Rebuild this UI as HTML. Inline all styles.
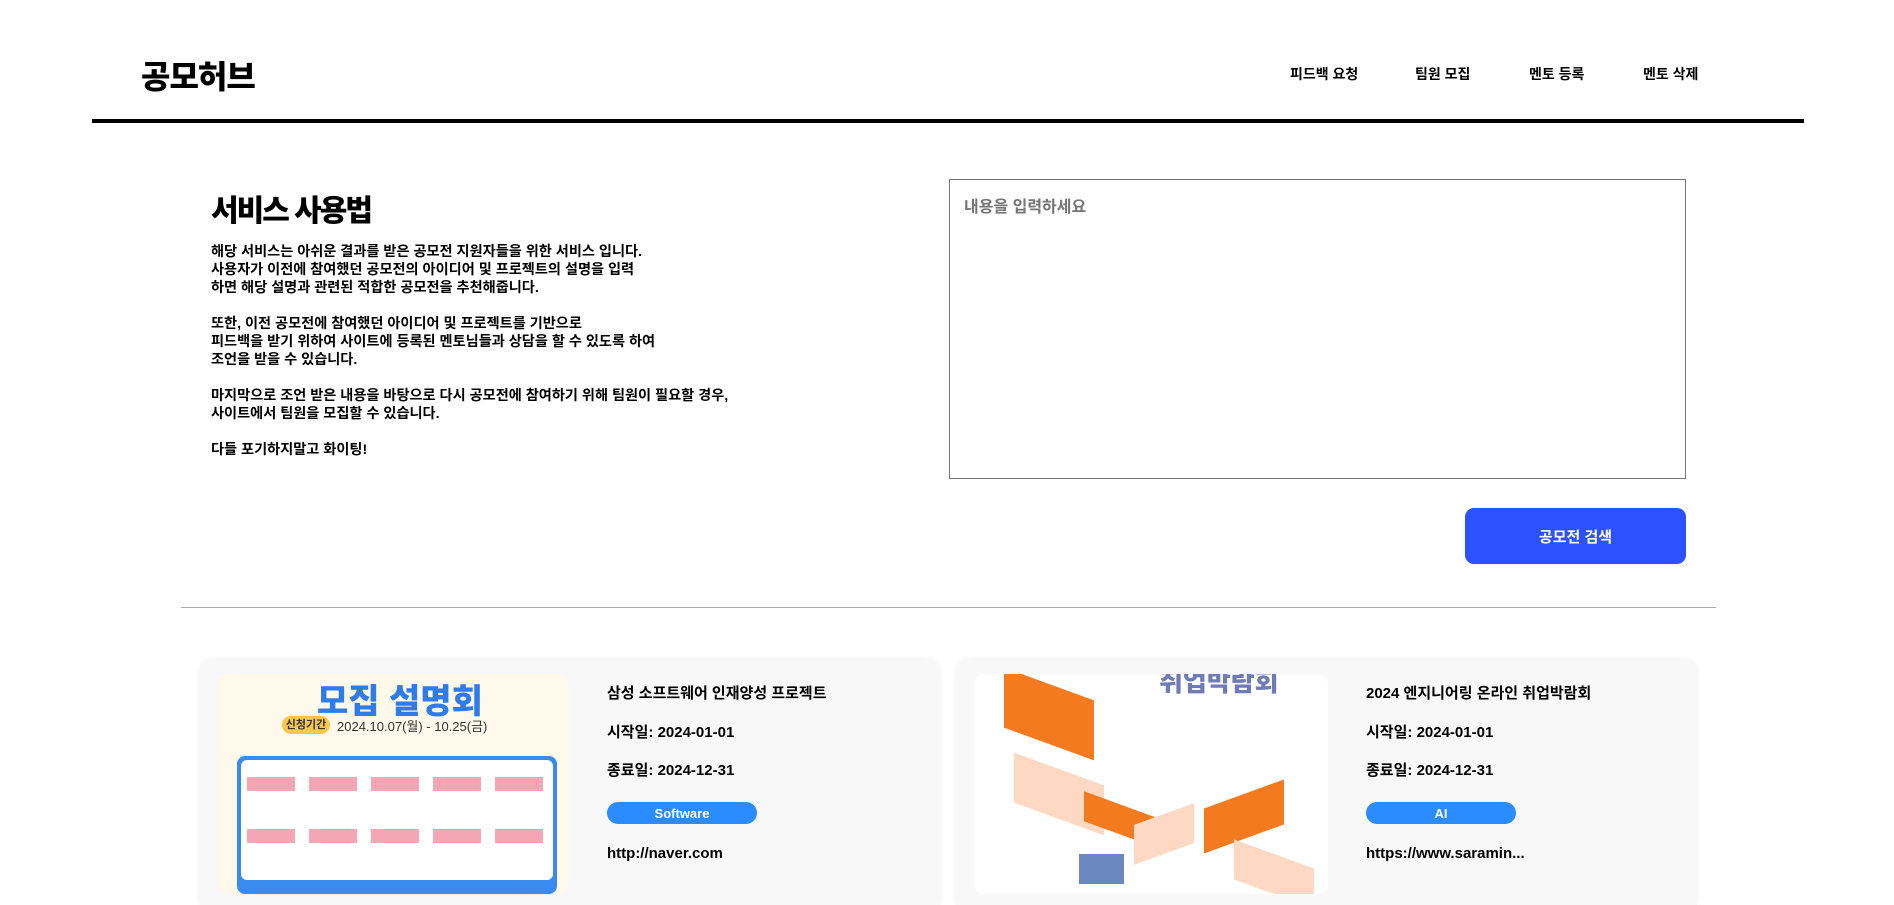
<!DOCTYPE html>
<html style="overflow:hidden;height:905px"><head><meta charset="utf-8"><style>
*{margin:0;padding:0;box-sizing:border-box}
body{width:1894px;height:905px;overflow:hidden;background:#fff;font-family:"Liberation Sans","Noto Sans CJK KR",sans-serif;color:#000;position:relative;font-weight:bold}
.a{position:absolute;white-space:nowrap}
.logo{left:141px;top:52px;font-size:32px;font-weight:900;letter-spacing:-1px}
.nav{top:64px;font-size:14px}
.line{left:92px;top:119px;width:1712px;height:4px;background:#000}
h1{position:absolute;left:211px;top:186px;font-size:30px;font-weight:900;letter-spacing:-2px}
.body{left:211px;top:243px;font-size:14.2px;line-height:18px;letter-spacing:0}
.ta{left:949px;top:179px;width:737px;height:300px;border:1px solid #767676}
.ph{left:964px;top:193px;font-size:16px;color:#757575}
.btn{left:1465px;top:508px;width:221px;height:56px;background:#2b52fe;border-radius:9px;color:#fff;font-size:15px;display:flex;align-items:center;justify-content:center}
.hr{left:181px;top:607px;width:1535px;height:1px;background:#aaa}
.card{top:659px;height:246px;background:#f8f8f8;border-radius:12px 12px 0 0;box-shadow:0 0 6px rgba(0,0,0,0.06)}
.img{top:674px;height:220px;border-radius:10px;overflow:hidden}
.t{font-size:15px}
.badge{width:150px;height:22px;border-radius:11px;background:#2a8cff;color:#fff;font-size:13px;display:flex;align-items:center;justify-content:center}
</style></head><body>
<div class="a logo">공모허브</div>
<div class="a nav" style="left:1290px">피드백 요청</div>
<div class="a nav" style="left:1415px">팀원 모집</div>
<div class="a nav" style="left:1529px">멘토 등록</div>
<div class="a nav" style="left:1643px">멘토 삭제</div>
<div class="a line"></div>
<h1>서비스 사용법</h1>
<div class="a body">해당 서비스는 아쉬운 결과를 받은 공모전 지원자들을 위한 서비스 입니다.<br>사용자가 이전에 참여했던 공모전의 아이디어 및 프로젝트의 설명을 입력<br>하면 해당 설명과 관련된 적합한 공모전을 추천해줍니다.<br><br>또한, 이전 공모전에 참여했던 아이디어 및 프로젝트를 기반으로<br>피드백을 받기 위하여 사이트에 등록된 멘토님들과 상담을 할 수 있도록 하여<br>조언을 받을 수 있습니다.<br><br>마지막으로 조언 받은 내용을 바탕으로 다시 공모전에 참여하기 위해 팀원이 필요할 경우,<br>사이트에서 팀원을 모집할 수 있습니다.<br><br>다들 포기하지말고 화이팅!</div>
<div class="a ta"></div>
<div class="a ph">내용을 입력하세요</div>
<div class="a btn">공모전 검색</div>
<div class="a hr"></div>

<div class="a card" style="left:200px;width:740px"></div>
<div class="a img" style="left:217px;width:352px;background:#fff9ec">
 <div class="a" style="left:100px;top:0;font-size:34px;color:#2f7be8;font-weight:900">모집 설명회</div>
 <div class="a" style="left:65px;top:42px;width:48px;height:18px;border-radius:9px;background:#f7c84a;font-size:11px;text-align:center;line-height:18px;color:#333">신청기간</div>
 <div class="a" style="left:120px;top:42px;font-size:13px;color:#333;font-weight:normal">2024.10.07(월) - 10.25(금)</div>
 <div class="a" style="left:20px;top:82px;width:320px;height:138px;background:#3a8af0;border-radius:8px"></div>
 <div class="a" style="left:24px;top:86px;width:312px;height:120px;background:#fff;border-radius:6px"></div>
 <div class="a" style="left:30px;top:103px;width:300px;height:14px;background:repeating-linear-gradient(90deg,#f4a6b4 0 48px,transparent 48px 62px)"></div>
 <div class="a" style="left:30px;top:155px;width:300px;height:14px;background:repeating-linear-gradient(90deg,#f4a6b4 0 48px,transparent 48px 62px)"></div>
</div>
<div class="a t" style="left:607px;top:682px">삼성 소프트웨어 인재양성 프로젝트</div>
<div class="a t" style="left:607px;top:721px">시작일: 2024-01-01</div>
<div class="a t" style="left:607px;top:759px">종료일: 2024-12-31</div>
<div class="a badge" style="left:607px;top:802px">Software</div>
<div class="a t" style="left:607px;top:845px">http://naver.com</div>

<div class="a card" style="left:956px;width:741px"></div>
<div class="a img" style="left:974px;width:354px;background:#fff">
 <div class="a" style="left:185px;top:-12px;font-size:26px;color:#6f7bb8;font-weight:900">취업박람회</div>
 <div class="a" style="left:30px;top:10px;width:90px;height:60px;background:#f47a1f;transform:skewY(20deg)"></div>
 <div class="a" style="left:40px;top:95px;width:90px;height:50px;background:#fdd9c4;transform:skewY(20deg)"></div>
 <div class="a" style="left:110px;top:130px;width:70px;height:30px;background:#f47a1f;transform:skewY(20deg)"></div>
 <div class="a" style="left:160px;top:140px;width:60px;height:40px;background:#fdd9c4;transform:skewY(-20deg)"></div>
 <div class="a" style="left:230px;top:120px;width:80px;height:45px;background:#f47a1f;transform:skewY(-20deg)"></div>
 <div class="a" style="left:260px;top:180px;width:80px;height:40px;background:#fdd9c4;transform:skewY(20deg)"></div>
 <div class="a" style="left:105px;top:180px;width:45px;height:30px;background:#6b88c0"></div>
</div>
<div class="a t" style="left:1366px;top:682px">2024 엔지니어링 온라인 취업박람회</div>
<div class="a t" style="left:1366px;top:721px">시작일: 2024-01-01</div>
<div class="a t" style="left:1366px;top:759px">종료일: 2024-12-31</div>
<div class="a badge" style="left:1366px;top:802px">AI</div>
<div class="a t" style="left:1366px;top:845px">https://www.saramin...</div>
</body></html>
